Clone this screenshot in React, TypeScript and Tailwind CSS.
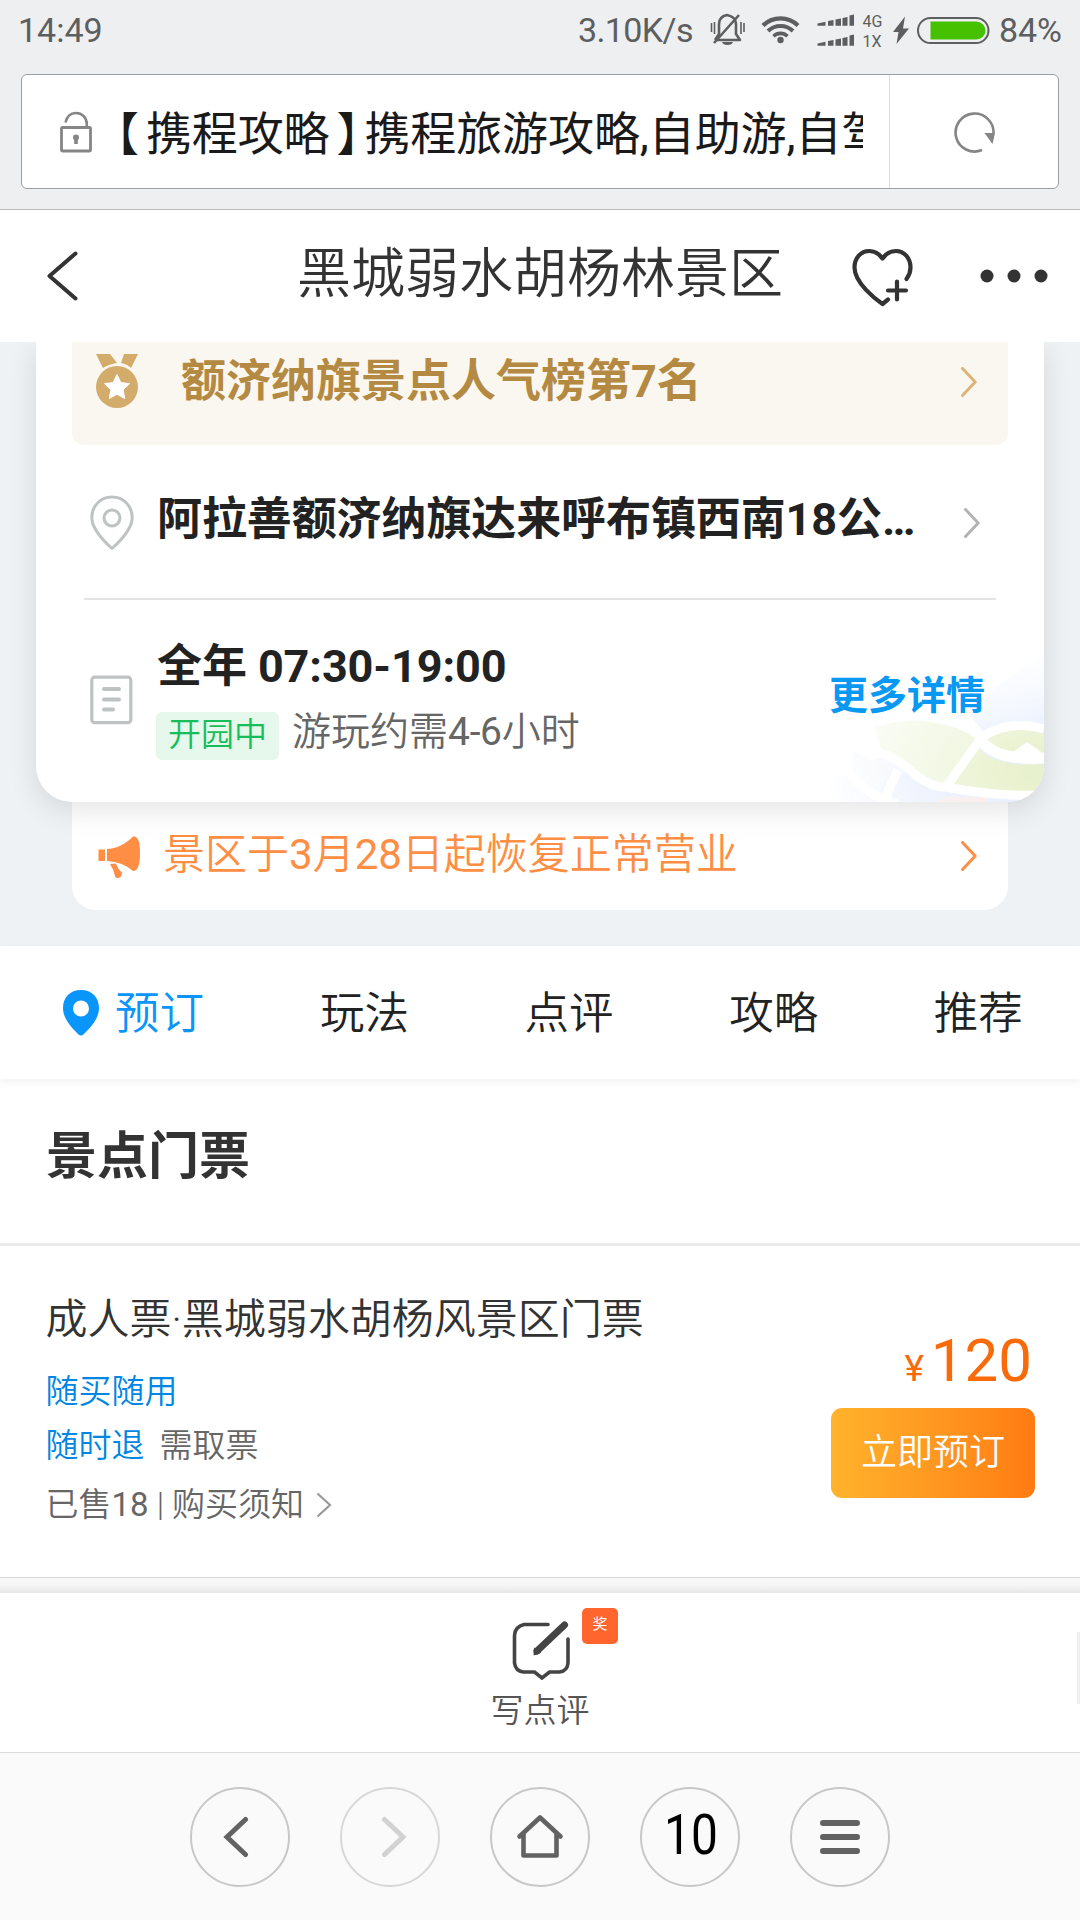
import type { ReactNode } from "react";
import { clsx } from "clsx";

const tabs = ["玩法", "点评", "攻略", "推荐"];

function Chevron({ className }: { className?: string }) {
  return (
    <svg viewBox="0 0 16 30" className={clsx("h-[30px] w-4 shrink-0", className)} fill="none">
      <path d="M1.5 1.5 14.2 15 1.5 28.5" stroke="currentColor" strokeWidth="3" strokeLinecap="round" strokeLinejoin="round" />
    </svg>
  );
}

function StatusBar() {
  return (
    <div className="flex h-[74px] items-start pt-[10px] pl-[18px] pr-[18px] text-[34px] leading-10 text-[#5c5e60]">
      <span>14:49</span>
      <span className="ml-auto tracking-[-0.6px]">3.10K/s</span>
      {/* Bell, wifi, two signal rows, bolt and battery share one drawing */}
      <svg viewBox="0 0 280 40" className="ml-[17px] mr-[9px] h-10 w-[280px]" fill="none" stroke="currentColor">
        {/* Muted bell */}
        <path d="M5 30h22M5 30l4-6V14c0-5 3-8 8-9 5 1 9 4 9 9v10l4 6h-9" strokeWidth="2.6" strokeLinejoin="round" />
        <path d="M4 33 29 5" strokeWidth="2.6" />
        <path d="M12 32h11q-1 3-5.500 3t-5.500-3z" fill="currentColor" stroke="none" />
        <path d="M1.500 13v9M4.500 12v12M31 12v12M34 13v9" strokeWidth="1.600" />
        {/* Wifi */}
        <path d="M53 15.500a25 25 0 0 1 35 0" strokeWidth="4.200" />
        <path d="M58 21a18 18 0 0 1 25 0" strokeWidth="4" />
        <path d="M63.500 26.200a10 10 0 0 1 14 0" strokeWidth="3.600" />
        <circle cx="70.500" cy="30" r="3.200" fill="currentColor" stroke="none" />
        {/* Signal strength, SIM 1 and 2 */}
        <g fill="currentColor" stroke="none">
          <path d="M107.500 13.500l8-1.800v4h-8zM118 11l5.500-1v5.700H118zM125.500 9.500l5.500-1v7.200h-5.500zM132.500 8l5-1v8.700h-5zM139.500 5.500l4.500-1v11.200h-4.500z" />
          <path d="M107.500 33.500l8-1.800v4h-8zM118 31l5.500-1v5.700H118zM125.500 29.500l5.500-1v7.200h-5.500zM132.500 28l5-1v8.700h-5zM139.500 25.500l4.500-1v11.200h-4.500z" />
          <text x="152.500" y="16.500" fontSize="16">4G</text>
          <text x="152.500" y="36.500" fontSize="16">1X</text>
          <path d="M195 6.500 183 22h5.500L186.500 34 199 18.500h-6z" />
        </g>
        <rect x="208" y="8" width="70.500" height="25" rx="12.500" strokeWidth="2" />
        <path d="M220.500 11.500h46a9 9 0 0 1 0 18h-46z" fill="#46c102" stroke="none" />
      </svg>
      <span>84%</span>
    </div>
  );
}

function AddressBar() {
  return (
    <div className="mx-[21px] flex h-[115px] items-center rounded-md border border-[#9c9ea0] bg-white">
      <svg viewBox="0 0 34 42" className="ml-[37px] h-[42px] w-[34px]" fill="none" stroke="#858585">
        <rect x="2.500" y="16.500" width="29" height="23.500" rx="1" strokeWidth="2.800" />
        <path d="M6.500 11.500C8 5 12 2 17 2c6 0 10.800 4.500 10.800 11v3" strokeWidth="2.600" />
        <path d="M17 25v8" strokeWidth="3.600" />
        <circle cx="17" cy="26.500" r="3" fill="#858585" stroke="none" />
      </svg>
      <div className="ml-1 mt-[6px] h-16 w-[766px] overflow-hidden whitespace-nowrap text-[46px] leading-[62px] tracking-[-0.1px] text-[#1a1a1a]">
        <span className="ml-[19px] mr-[7px] [font-feature-settings:'halt']">【</span>
        携程攻略
        <span className="ml-[7px] mr-[5px] [font-feature-settings:'halt']">】</span>
        携程旅游攻略,自助游,自驾
      </div>
      <div className="ml-auto flex h-full w-[169px] items-center justify-center border-l border-[#dedede]">
        <svg viewBox="0 0 42 42" className="ml-px mt-[2px] h-[42px] w-[42px]" fill="none">
          <path d="M39.500 22A19 19 0 1 0 28 38" stroke="#858585" strokeWidth="2.600" />
          <path d="M30.500 21h10.500l-2.500 11z" fill="#858585" />
        </svg>
      </div>
    </div>
  );
}

function TitleBar() {
  return (
    <header className="grid h-[132px] shrink-0 grid-cols-[270px_1fr_270px] items-center bg-white">
      <svg viewBox="0 0 34 52" className="ml-[45px] h-[52px] w-[34px]" fill="none">
        <path d="M30.500 3.500 4.500 26l26 22.500" stroke="#333" strokeWidth="4" strokeLinecap="round" strokeLinejoin="round" />
      </svg>
      <h1 className="mt-[-3px] text-center text-[54px] font-[350] leading-[80px] text-[#333]">黑城弱水胡杨林景区</h1>
      <div className="flex items-center">
        <svg viewBox="0 0 62 60" className="ml-[41px] mt-[2px] h-[60px] w-[62px]" fill="none" stroke="#333" strokeWidth="4.200" strokeLinecap="round" strokeLinejoin="round">
          <path d="M37 52.500 31.500 57C25 52.500 3.500 36 3.500 20.500 3.500 11 10 4 18 4c6 0 10.500 3 13.500 7.500C34.500 7 39 4 45 4c8 0 14.500 7 14.500 16.500 0 4-1.500 8-4 11.500" />
          <path d="M37 43.500h18M46 34.500v18" />
        </svg>
        <svg viewBox="0 0 68 14" className="ml-[67px] h-[14px] w-[68px] overflow-visible" fill="#333">
          <circle cx="7" cy="7" r="6.500" />
          <circle cx="34" cy="7" r="6.500" />
          <circle cx="61" cy="7" r="6.500" />
        </svg>
      </div>
    </header>
  );
}

function MapArt() {
  return (
    <svg viewBox="0 0 260 160" className="absolute right-0 bottom-0 h-40 w-[260px] opacity-70">
      <defs>
        <radialGradient id="fade" cx="1" cy="0.800" r="0.850">
          <stop offset="0.100" stopColor="#fff" />
          <stop offset="0.600" stopColor="#888" />
          <stop offset="1" stopColor="#000" />
        </radialGradient>
        <mask id="mapMask">
          <rect width="260" height="160" fill="url(#fade)" />
        </mask>
        <linearGradient id="water" x1="0.200" y1="0" x2="0.600" y2="0.800">
          <stop offset="0.200" stopColor="#fff" />
          <stop offset="1" stopColor="#d8e5fd" />
        </linearGradient>
      </defs>
      <g mask="url(#mapMask)">
        <path d="M260 10 150 90 0 160h260z" fill="url(#water)" />
        <path d="M90 84q40-16 104 10l-34 50-62-34z" fill="#e5f0c8" />
        <path d="M200 97q30-20 60-10v30h-32q-20-6-28-20zM194 104q14 22 66 18v32l-94-10z" fill="#dfebb8" />
        <path d="M70 110l38 16-14 28-30-10z" fill="#e2ecf5" />
        <path d="M116 130l32 10-4 20h-44z" fill="#d8e2fa" />
        <path d="M160 155h44v5h-50z" fill="#f7dede" />
        <g fill="none" stroke="#fff" strokeWidth="9">
          <path d="M76 106q30 4 50 22t36 17q50 10 98 8" />
          <path d="M92 80q60-18 106 15l-36 50M198 95q28-18 62-8M180 74l18 21M114 128l-16 34M64 128q14 24 50 34" />
          <path d="M198 99q14 20 62 17" strokeWidth="11" />
        </g>
        <path d="M226 112l17-12 17 12v8h-34z" fill="#fff" />
      </g>
    </svg>
  );
}

function InfoRow({ icon, className, children }: { icon: ReactNode; className?: string; children: ReactNode }) {
  return (
    <div className={clsx("flex items-center", className)}>
      <div className="flex w-[67px] shrink-0">{icon}</div>
      {children}
    </div>
  );
}

function InfoCard() {
  return (
    <div className="relative z-10 mx-9 h-[460px] rounded-b-[36px] bg-white shadow-[0_8px_30px_rgba(0,0,0,0.11)]">
      <div className="absolute inset-0 overflow-hidden rounded-b-[36px]">
        <MapArt />
      </div>
      <div className="relative">
        {/* Ranking */}
        <div className="mx-9 flex h-[103px] items-start rounded-b-xl bg-[#faf7f0] text-[#b48a42]">
          <svg viewBox="0 0 44 54" className="ml-[23px] mt-[12px] h-[54px] w-11" fill="#d3ac6c">
            <path d="M1 0h14l7 9q-8 1-14 5zM43 0H29l-3 9q6 1 10 5z" />
            <circle cx="22" cy="33" r="21" />
            <path d="m22 20.500 3.800 8 8.700 1.200-6.300 6.100 1.500 8.700-7.700-4.200-7.700 4.200 1.500-8.700-6.300-6.100 8.700-1.200z" fill="#fff" stroke="#fff" strokeLinejoin="round" />
          </svg>
          <span className="ml-[42px] mt-[10px] text-[45px] font-bold leading-[60px]">额济纳旗景点人气榜第7名</span>
          <Chevron className="ml-auto mr-[31px] mt-[25px] text-[#dcb478]" />
        </div>

        {/* Address */}
        <InfoRow
          className="mx-12 h-[155px] border-b-2 border-[#e2e3e4] pl-[6px] pr-4"
          icon={
            <svg viewBox="0 0 44 56" className="mt-[2px] h-14 w-11" fill="none" stroke="#bfc2c3" strokeWidth="3">
              <path d="M22 53.500C17 49 1.800 35 1.800 22.500 1.800 11 10.500 2 22 2s20.200 9 20.200 20.500C42.200 35 27 49 22 53.500z" strokeLinejoin="round" />
              <circle cx="22" cy="23" r="8" />
            </svg>
          }
        >
          <span className="-mt-[3px] text-[45px] font-bold leading-[60px] tracking-[-0.1px] text-[#222] whitespace-nowrap">阿拉善额济纳旗达来呼布镇西南18公…</span>
          <Chevron className="ml-auto mt-[2px] text-[#b3b3b3]" />
        </InfoRow>

        {/* Opening hours */}
        <InfoRow
          className="mx-12 h-[196px] pl-[6px] pr-[11px]"
          icon={
            <svg viewBox="0 0 44 50" className="mt-[4px] h-[50px] w-11" fill="none" stroke="#bfc2c3" strokeLinecap="round">
              <rect x="1.800" y="2.200" width="39" height="45.500" rx="3" strokeWidth="3.200" />
              <path d="M14 14h15M14 24.500h15M14 34.500h9" strokeWidth="4" />
            </svg>
          }
        >
          <div className="pt-px">
            <div className="text-[45px] font-bold leading-[60px] tracking-[-0.1px] text-[#222]">全年 07:30-19:00</div>
            <div className="mt-[15px] flex items-center">
              <span className="-ml-[1px] mr-[13px] flex h-12 w-[123px] items-center justify-center rounded-md bg-[#e5f8eb] text-[33px] font-[350] leading-[44px] text-[#18bd5b]">
                <span className="-mt-[3px]">开园中</span>
              </span>
              <span className="-mt-[8px] text-[39px] font-[350] leading-[48px] text-[#666]">
                游玩约需<span className="font-normal tracking-[-0.3px]">4-6</span>小时
              </span>
            </div>
          </div>
          <span className="-mt-1 ml-auto text-[39px] font-bold leading-[52px] text-[#0998f2]">更多详情</span>
        </InfoRow>
      </div>
    </div>
  );
}

function Notice() {
  return (
    <div className="mx-[72px] flex h-[108px] items-center rounded-b-3xl bg-white pl-[25px] pr-[31px] text-[#ff8e45]">
      <svg viewBox="0 0 44 46" className="mt-[2px] h-[46px] w-11" fill="currentColor">
        <path d="M1.500 15.500H8V27H1.500zM10 15c9 0 19-5 26-12.500Q43 1 43 19t-7 18Q26 28 10 27z" />
        <path d="M13 30l6-.5q2 6 6 9 0 5-4 5.500-3 0-3-2-1-6-5-12z" />
      </svg>
      <span className="-mt-[3px] ml-[22px] text-[42px] font-[350] leading-[56px]">
        景区于<span className="font-normal">3</span>月<span className="font-normal">28</span>日起恢复正常营业
      </span>
      <Chevron className="ml-auto text-[#ff8e45]" />
    </div>
  );
}

function Tabs() {
  return (
    <nav className="relative flex h-[133px] shrink-0 items-center bg-white pl-[62px] text-[44.500px] font-[350] text-[#222] shadow-[0_3px_8px_rgba(0,0,0,0.06)]">
      <svg viewBox="0 0 38 46" className="h-[46px] w-[38px] shrink-0" fill="#0a95fb">
        <path fillRule="evenodd" d="M19 0c11 0 18 7.500 18 18 0 11-9 20-15.500 26.500q-2.500 2-5 0C10 38 1 29 1 18 1 7.500 8 0 19 0zm0 10.500a8 8 0 1 0 0 16 8 8 0 0 0 0-16z" />
      </svg>
      <span className="mt-[4px] ml-[15px] w-[205px] shrink-0 text-[#0a95fb]">预订</span>
      {tabs.map((tab) => (
        <span key={tab} className="mt-[4px] w-[204.600px] shrink-0">
          {tab}
        </span>
      ))}
    </nav>
  );
}

function Ticket() {
  return (
    <div className="flex h-[332px] shrink-0 justify-between border-b border-[#d8d8d8] pl-[45.500px] pr-[45px]">
      <div className="pt-[46px] text-[33px] font-[350] leading-[54px] text-[#666]">
        <div className="text-[42px] leading-[56px] text-[#333]">成人票·黑城弱水胡杨风景区门票</div>
        <div className="mt-[17px] text-[#0086e3]">随买随用</div>
        <div className="flex gap-[15px]">
          <span className="text-[#0086e3]">随时退</span>
          <span>需取票</span>
        </div>
        <div className="mt-[5px] flex items-center">
          <span>
            已售<span className="font-normal">18</span> | 购买须知
          </span>
          <svg viewBox="0 0 16 26" className="ml-3 h-[26px] w-4" fill="none">
            <path d="M1.500 1.500 14 13 1.500 24.500" stroke="#999" strokeWidth="2.200" />
          </svg>
        </div>
      </div>
      <div className="flex flex-col items-end pt-[78px]">
        <div className="h-[74px] pr-[3px] text-[60px] leading-[74px] text-[#f96a0a]">
          <span className="mr-[7px] text-[37px]">¥</span>120
        </div>
        <button className="mt-[10px] flex h-[90px] w-[204px] items-center justify-center rounded-[11px] bg-linear-to-r from-[#ffb32c] to-[#ff7b12] text-[36px] font-[350] text-white">
          立即预订
        </button>
      </div>
    </div>
  );
}

function ReviewBar() {
  return (
    <div className="flex h-[159px] shrink-0 flex-col items-center bg-white">
      <div className="relative mt-[25px] ml-[2px]">
        <svg viewBox="0 0 60 62" className="h-[62px] w-[60px]" fill="none" stroke="#444" strokeWidth="3.600">
          <path d="M37 6.500H13q-9 2-9.500 11V45q1 8 9 9h11l7.500 6 7.500-6h10q8-1 8.500-9V21" strokeLinecap="round" />
          <path d="M53.500 7 26 33" strokeWidth="7" strokeLinecap="round" />
          <path d="m23.500 30 6 4.500-6.500 2.500z" fill="#444" strokeWidth="1" />
        </svg>
        <span className="absolute -top-[10px] left-[71px] flex h-9 w-9 justify-center rounded-[5px] bg-[#ff652d] text-[15px] leading-8 text-white">奖</span>
      </div>
      <span className="mt-[9px] text-[33px] font-[350] leading-[44px] text-[#555]">写点评</span>
    </div>
  );
}

function NavButton({ disabled, children }: { disabled?: boolean; children: ReactNode }) {
  return (
    <button
      className={clsx(
        "flex h-[100px] w-[100px] items-center justify-center rounded-full border-2",
        disabled ? "border-[#d8d8d8] text-[#d2d2d2]" : "border-[#c8c8c8] text-[#626262]",
      )}
    >
      {children}
    </button>
  );
}

function BrowserNav() {
  return (
    <footer className="flex h-[168px] shrink-0 items-start justify-center gap-[50px] border-t border-[#dbdbdb] bg-[#fafafa] pt-[34px]">
      <NavButton>
        <svg viewBox="0 0 30 42" className="-ml-2 h-[42px] w-[30px]" fill="none">
          <path d="M24.500 3.500 6 21l18.500 17.500" stroke="currentColor" strokeWidth="5" strokeLinecap="round" />
        </svg>
      </NavButton>
      <NavButton disabled>
        <svg viewBox="0 0 30 42" className="ml-2 h-[42px] w-[30px]" fill="none">
          <path d="M5.500 3.500 24 21 5.500 38.500" stroke="currentColor" strokeWidth="5" strokeLinecap="round" />
        </svg>
      </NavButton>
      <NavButton>
        <svg viewBox="0 0 48 46" className="-mt-[2px] h-[46px] w-12" fill="none" stroke="currentColor" strokeWidth="4.600" strokeLinecap="round" strokeLinejoin="round">
          <path d="M3.500 23.500 24 4.500l20.500 19M7.500 21v21.500h33V21" />
        </svg>
      </NavButton>
      <NavButton>
        <span className="-mt-1 ml-[2px] scale-x-[0.87] text-[55px] leading-none text-black">10</span>
      </NavButton>
      <NavButton>
        <svg viewBox="0 0 40 36" className="h-9 w-10" stroke="currentColor" strokeWidth="6" strokeLinecap="round">
          <path d="M3 4h34M3 18h34M3 32h34" />
        </svg>
      </NavButton>
    </footer>
  );
}

export default function App() {
  return (
    <div className="relative flex h-[1920px] w-[1080px] flex-col overflow-hidden bg-white font-[Roboto,'Noto_Sans_CJK_SC',sans-serif]">
      <div className="h-[210px] shrink-0 border-b border-[#b8b9ba] bg-[#eeeff1]">
        <StatusBar />
        <AddressBar />
      </div>
      <TitleBar />
      <div className="h-[604px] shrink-0 overflow-hidden bg-[#eef2f5]">
        <InfoCard />
        <Notice />
      </div>
      <Tabs />
      <h2 className="h-[164px] shrink-0 pl-[46px] pt-[44px] text-[51px] font-bold leading-[68px] text-[#333]">景点门票</h2>
      <div className="h-[3px] shrink-0 bg-[#ebebeb]" />
      <Ticket />
      <div className="h-[15px] shrink-0 bg-linear-to-b from-[#f9f9f9] via-[#f5f5f5] to-[#e6e6e6]" />
      <ReviewBar />
      <BrowserNav />
      {/* Edge of the side drawer */}
      <div className="absolute right-0 top-[1632px] h-[72px] w-[3px] bg-[#f0f0f0]" />
    </div>
  );
}
